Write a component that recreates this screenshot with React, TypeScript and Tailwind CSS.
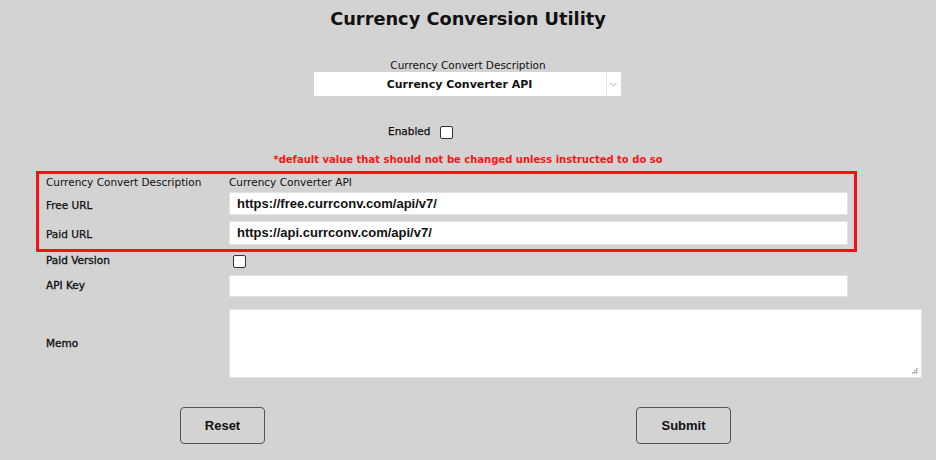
import React from 'react';

const labelFont = { fontFamily: '"DejaVu Sans", "Liberation Sans", sans-serif' };
const urlFont = { fontFamily: '"Liberation Sans", Arial, sans-serif' };

const Check = () => (
  <span className="inline-block w-[13px] h-[13px] bg-white border border-[#333] rounded-[2px]" />
);

export default function App() {
  return (
    <div className="w-[936px] h-[460px] bg-[#d3d3d3] text-[#111] overflow-hidden" style={labelFont}>
      <h1 className="pt-[8px] h-[32px] text-center text-[17.8px] font-bold leading-[22px]">
        Currency Conversion Utility
      </h1>

      <div className="mt-[26px] flex flex-col items-center pr-[2px]">
        <div className="text-[10.5px] leading-[14px] h-[14px] pl-[2px]">Currency Convert Description</div>
        <div className="w-[307px] h-[24px] bg-white flex items-center">
          <div className="flex-1 text-center text-[11px] font-bold pt-[2px]">Currency Converter API</div>
          <div className="w-[15px] h-[22px] border-l border-[#e4e4e4] flex items-center justify-center">
            <svg width="7" height="5" viewBox="0 0 7 5">
              <path d="M0.5 1 L3.5 4 L6.5 1" stroke="#a8a8a8" strokeWidth="1" fill="none" />
            </svg>
          </div>
        </div>
      </div>

      <div className="mt-[28px] ml-[388px] h-[16px] flex items-center gap-[10px]">
        <span className="text-[10.5px] [-webkit-text-stroke:0.25px]">Enabled</span>
        <Check />
      </div>

      <div className="mt-[12px] h-[16px] text-center text-[10px] leading-[16px] text-[#ff1414] font-bold">
        *default value that should not be changed unless instructed to do so
      </div>

      <div className="ml-[36px] mt-[3px] w-[821px]">
        <div className="border-[3px] border-[#f81010] pl-[7px] pr-[6px] pb-[4px]">
          <div className="h-[18px] flex items-center text-[10.5px]">
            <span className="w-[183px] shrink-0">Currency Convert Description</span>
            <span>Currency Converter API</span>
          </div>
          <div className="h-[29px] flex items-start text-[10.5px]">
            <span className="w-[183px] shrink-0 mt-[6px] [-webkit-text-stroke:0.25px]">Free URL</span>
            <div className="w-[619px] h-[23px] bg-white border border-[#e2e2e2] flex items-center px-[7px] text-[13px] font-bold" style={urlFont}>
              https://free.currconv.com/api/v7/
            </div>
          </div>
          <div className="h-[24px] flex items-start text-[10.5px]">
            <span className="w-[183px] shrink-0 mt-[6px] [-webkit-text-stroke:0.25px]">Paid URL</span>
            <div className="w-[619px] h-[24px] bg-white border border-[#e2e2e2] flex items-center px-[7px] text-[13px] font-bold" style={urlFont}>
              https://api.currconv.com/api/v7/
            </div>
          </div>
        </div>

        <div className="pl-[10px] h-[16px] mt-[1px] flex items-center text-[10.5px] [-webkit-text-stroke:0.35px]">
          <span className="w-[187px] shrink-0">Paid Version</span>
          <Check />
        </div>

        <div className="pl-[10px] mt-[6px] flex items-center text-[10.5px] [-webkit-text-stroke:0.35px]">
          <span className="w-[183px] shrink-0">API Key</span>
          <div className="w-[619px] h-[22px] bg-white border border-[#e2e2e2]" />
        </div>

        <div className="pl-[10px] mt-[12px] flex items-center text-[10.5px] [-webkit-text-stroke:0.35px]">
          <span className="w-[183px] shrink-0">Memo</span>
          <div className="relative w-[693px] h-[69px] bg-white border border-[#e2e2e2] shrink-0">
            <svg className="absolute right-[3px] bottom-[3px]" width="7" height="7" viewBox="0 0 7 7">
              <rect x="5" y="1" width="1.5" height="1.5" fill="#a0a0a0" />
              <rect x="3" y="3" width="1.5" height="1.5" fill="#a0a0a0" />
              <rect x="5" y="3" width="1.5" height="1.5" fill="#a0a0a0" />
              <rect x="1" y="5" width="1.5" height="1.5" fill="#a0a0a0" />
              <rect x="3" y="5" width="1.5" height="1.5" fill="#a0a0a0" />
              <rect x="5" y="5" width="1.5" height="1.5" fill="#a0a0a0" />
            </svg>
          </div>
        </div>
      </div>

      <div className="mt-[29px] flex" style={urlFont}>
        <button className="ml-[180px] w-[85px] h-[37px] border border-[#555] rounded-[4px] text-[13px] font-bold text-[#111]">
          Reset
        </button>
        <button className="ml-[371px] w-[95px] h-[37px] border border-[#555] rounded-[4px] text-[13px] font-bold text-[#111]">
          Submit
        </button>
      </div>
    </div>
  );
}
